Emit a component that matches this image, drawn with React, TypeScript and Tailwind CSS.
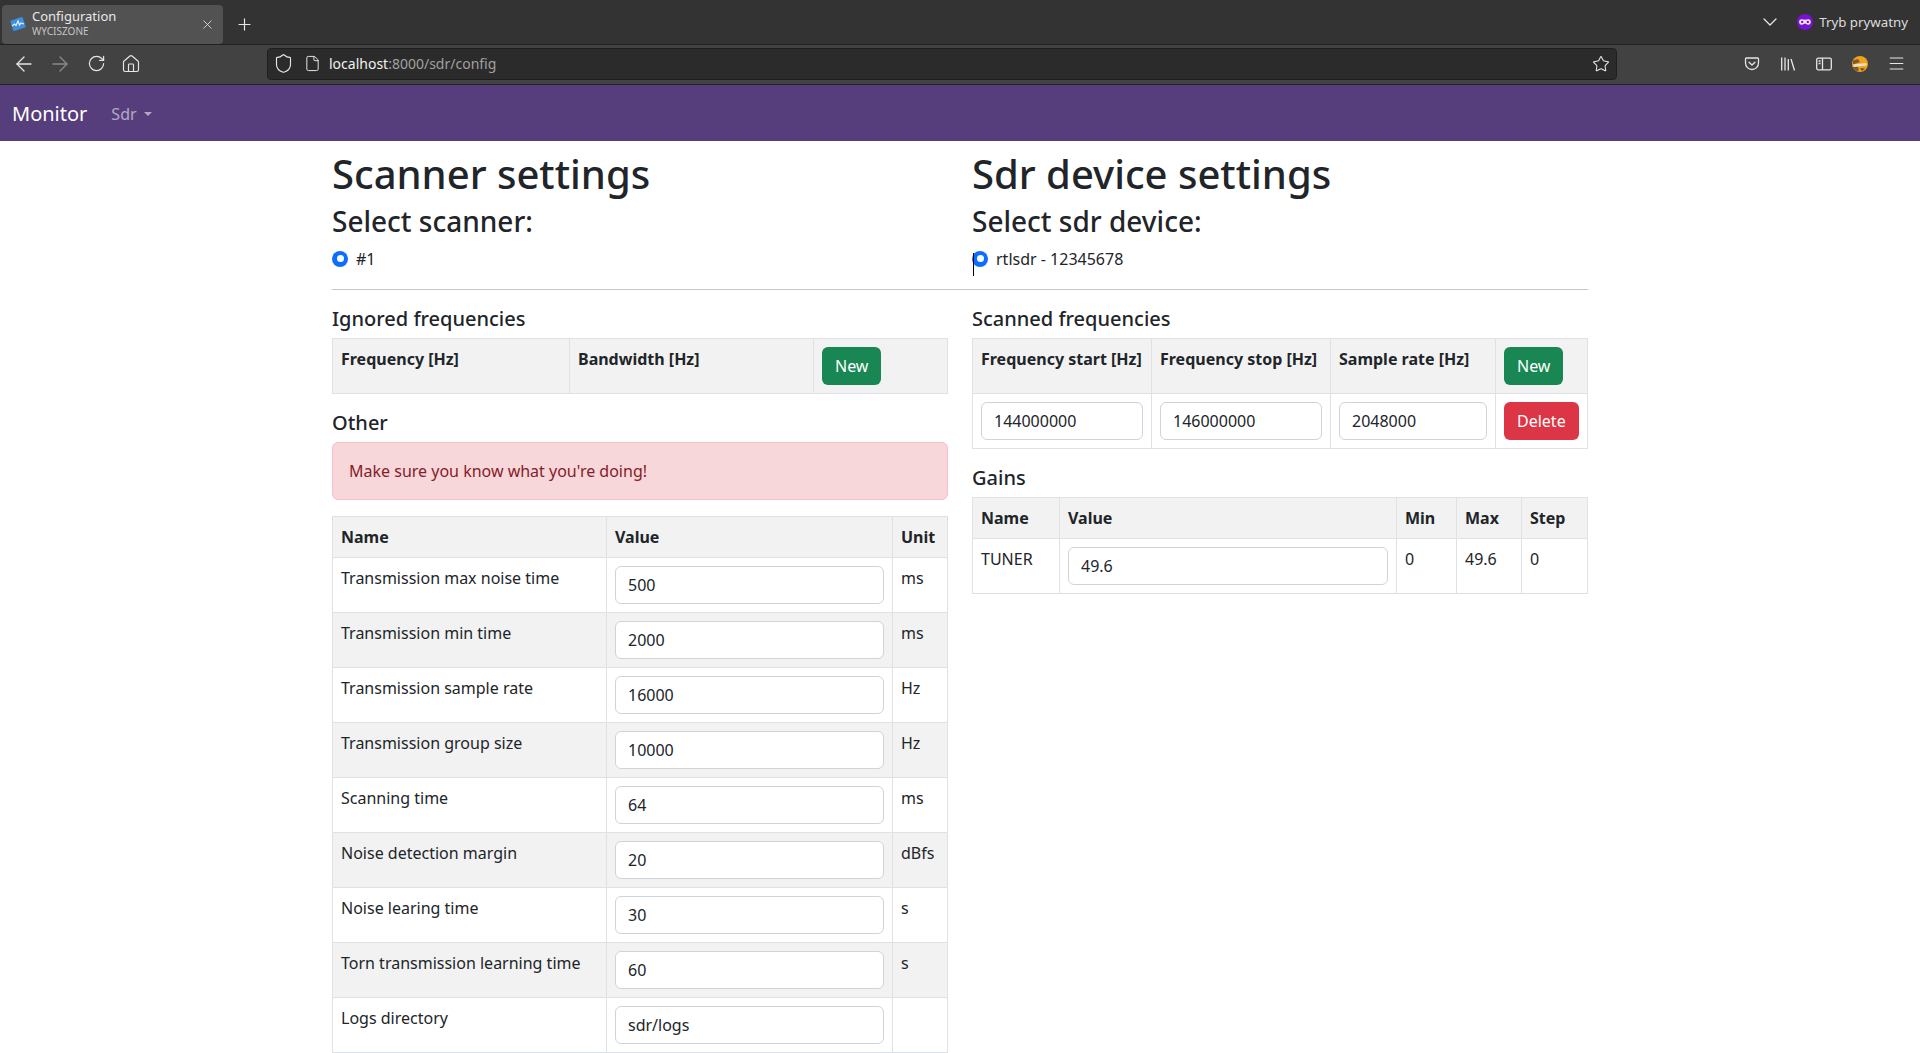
import React from 'react';
import { ArrowLeft, ArrowRight, RotateCw, House, Shield, File, Star, X, Plus, ChevronDown, Menu } from 'lucide-react';

const otherRows = [
  ['Transmission max noise time', '500', 'ms'],
  ['Transmission min time', '2000', 'ms'],
  ['Transmission sample rate', '16000', 'Hz'],
  ['Transmission group size', '10000', 'Hz'],
  ['Scanning time', '64', 'ms'],
  ['Noise detection margin', '20', 'dBfs'],
  ['Noise learing time', '30', 's'],
  ['Torn transmission learning time', '60', 's'],
  ['Logs directory', 'sdr/logs', ''],
];

const thClass = 'border border-[#dee2e6] p-2 text-left align-top font-bold';
const tdClass = 'border border-[#dee2e6] p-2 text-left align-top font-normal';

const TextInput = ({ value }: { value: string }) => (
  <input
    type="text"
    readOnly
    value={value}
    className="block h-[38px] w-full rounded-md border border-[#ced4da] bg-white px-3 py-1.5 text-[#212529] outline-none"
  />
);

const Button = ({ color, children }: { color: 'green' | 'red'; children: React.ReactNode }) => (
  <button
    className={
      color === 'green'
        ? 'h-[38px] rounded-md bg-[#198754] px-[13px] font-normal text-white'
        : 'h-[38px] rounded-md bg-[#dc3545] px-[13px] font-normal text-white'
    }
  >
    {children}
  </button>
);

const Radio = ({ label, caret }: { label: string; caret?: boolean }) => (
  <div className="relative flex h-6 items-center gap-2">
    <span className="flex h-4 w-4 items-center justify-center rounded-full bg-[#0d6efd]">
      <span className="h-[7px] w-[7px] rounded-full bg-white" />
    </span>
    <span>{label}</span>
    {caret && <span className="absolute left-[1px] top-[6px] h-[23px] w-px bg-black" />}
  </div>
);

const ToolButton = ({ children }: { children: React.ReactNode }) => (
  <div className="flex h-9 w-9 items-center justify-center">{children}</div>
);

const Favicon = () => (
  <svg width="16" height="16" viewBox="0 0 16 16">
    <rect x="1.5" y="2.5" width="13" height="11" rx="1" fill="#3d8fe0" transform="rotate(-18 8 8)" />
    <path d="M2 10l2.5-2 1.5 1.5L8 5l1.5 4 1.5-2 3 1" fill="none" stroke="#e8f4ff" strokeWidth="1.2" />
  </svg>
);

const PrivateMask = () => (
  <svg width="16" height="16" viewBox="0 0 16 16">
    <circle cx="8" cy="8" r="8" fill="#7a12d4" />
    <path
      d="M4.6 5.2c1.2 0 2.2.5 3.4.5s2.2-.5 3.4-.5c1.4 0 2.4 1 2.4 2.6 0 1.8-1 3-2.5 3-1.5 0-2.1-1.3-3.3-1.3S6.1 10.8 4.6 10.8c-1.5 0-2.5-1.2-2.5-3 0-1.6 1-2.6 2.5-2.6z"
      fill="#f3e8ff"
    />
    <circle cx="5.2" cy="7.9" r="1.2" fill="#7a12d4" />
    <circle cx="10.8" cy="7.9" r="1.2" fill="#7a12d4" />
  </svg>
);

const PocketIcon = () => (
  <svg width="16" height="16" viewBox="0 0 16 16" fill="none" stroke="#e6e6e6" strokeWidth="1.3">
    <path d="M2.4 2h11.2c.5 0 .9.4.9.9V7a6.5 6.5 0 0 1-13 0V2.9c0-.5.4-.9.9-.9z" />
    <path d="M5 6.2l3 2.8 3-2.8" strokeLinecap="round" strokeLinejoin="round" />
  </svg>
);

const LibraryIcon = () => (
  <svg width="16" height="16" viewBox="0 0 16 16" fill="none" stroke="#e6e6e6" strokeWidth="1.3">
    <path d="M1.7 1.5v13M5 1.5v13M8.3 3v11.5M11 3l3.5 11.5" />
  </svg>
);

const SidebarIcon = () => (
  <svg width="16" height="16" viewBox="0 0 16 16" fill="none" stroke="#e6e6e6" strokeWidth="1.3">
    <rect x="0.7" y="2.2" width="14.6" height="11.6" rx="1.5" />
    <path d="M6.5 2.2v11.6M2.6 5h2M2.6 7.5h2" />
  </svg>
);

const Avatar = () => (
  <svg width="16" height="16" viewBox="0 0 16 16">
    <circle cx="8" cy="8" r="8" fill="#f0a21a" />
    <path d="M1 4.5l5-1.5 2 3-7 2.5zM0 11l6-.5 1 4-3 .5z" fill="#7a5a30" />
    <path d="M1 8.5l13-1.5.8 2.5-13 1.5z" fill="#ece0c4" />
    <path d="M8 12l5 .5-3 2.5z" fill="#6b4c28" />
  </svg>
);

const BrowserChrome = () => (
  <div className="font-['Noto_Sans',sans-serif] text-[#e6e6e6]">
    <div className="flex h-[44px] items-end justify-between bg-[#333333] pl-[2px] pr-[12px]">
      <div className="flex h-[40px] items-center">
        <div className="flex h-[39px] w-[221px] items-center rounded-[4px] bg-[#525252] pl-[8px] pr-[8px]">
          <Favicon />
          <div className="ml-[6px] flex-1 -translate-y-[1px] leading-none">
            <div className="-translate-y-[1px] text-[13px] leading-[16px] text-[#e8e8e8]">Configuration</div>
            <div className="text-[10px] leading-[12px] text-[#c4c4c4]">WYCISZONE</div>
          </div>
          <X size={15} strokeWidth={1.3} />
        </div>
        <Plus size={19} strokeWidth={1.5} className="ml-[12px]" />
      </div>
      <div className="flex h-[40px] -translate-y-[2px] items-center text-[13.3px]">
        <ChevronDown size={24} strokeWidth={1.3} />
        <span className="ml-[15px] mr-[6px]">
          <PrivateMask />
        </span>
        <span className="text-[#dcdcdc]">Tryb prywatny</span>
      </div>
    </div>
    <div className="flex h-[41px] items-center justify-between border-y border-[#222222] bg-[#424242] pl-[5px] pr-[6px]">
      <div className="flex items-center -translate-y-[1px]">
        <ToolButton><ArrowLeft size={24} strokeWidth={1.3} className="translate-x-[1px]" /></ToolButton>
        <ToolButton><ArrowRight size={24} strokeWidth={1.3} className="translate-x-[1px] text-[#8a8a8a]" /></ToolButton>
        <ToolButton><RotateCw size={19} strokeWidth={1.5} className="translate-x-[1px]" /></ToolButton>
        <ToolButton><House size={20} strokeWidth={1.4} /></ToolButton>
      </div>
      <div className="ml-[118px] mr-[117px] flex h-[32px] flex-1 -translate-y-[1px] items-center rounded-[4px] border border-[#1f1f1f] bg-[#2b2b2b] pl-[5px] pr-[6px]">
        <Shield size={21} strokeWidth={1.3} />
        <File size={17} strokeWidth={1.4} className="ml-[10px]" />
        <span className="ml-[8px] flex-1 text-[14px]">
          <span className="text-[#f0f0f0]">localhost</span>
          <span className="text-[#a0a0a0]">:8000/sdr/config</span>
        </span>
        <Star size={18} strokeWidth={1.4} />
      </div>
      <div className="flex items-center -translate-y-[1px]">
        <ToolButton><PocketIcon /></ToolButton>
        <ToolButton><LibraryIcon /></ToolButton>
        <ToolButton><SidebarIcon /></ToolButton>
        <ToolButton><Avatar /></ToolButton>
        <ToolButton><Menu size={19} strokeWidth={1.4} /></ToolButton>
      </div>
    </div>
  </div>
);

const Navbar = () => (
  <nav className="flex h-[56px] items-center bg-[#563d7c] px-3 pt-[1px]">
    <span className="text-xl leading-[30px] text-white">Monitor</span>
    <span className="ml-6 flex items-center text-white/55">
      Sdr
      <span className="ml-[7px] h-0 w-0 border-x-[4px] border-t-[4px] border-x-transparent border-t-white/55" />
    </span>
  </nav>
);

export default function App() {
  return (
    <div className="h-screen overflow-hidden bg-white font-['Noto_Sans',sans-serif] text-base leading-6 text-[#212529]">
      <BrowserChrome />
      <Navbar />
      <main className="mx-auto w-[1280px] px-3 pt-[9px]">
        <div className="grid grid-cols-2 gap-x-6">
          <div>
            <h1 className="mb-[7px] text-[40px] leading-[48px] font-medium">Scanner settings</h1>
            <h3 className="mb-2 text-[28px] leading-[33.6px] font-medium">Select scanner:</h3>
            <Radio label="#1" />
          </div>
          <div>
            <h1 className="mb-[7px] text-[40px] leading-[48px] font-medium">Sdr device settings</h1>
            <h3 className="mb-2 text-[28px] leading-[33.6px] font-medium">Select sdr device:</h3>
            <Radio label="rtlsdr - 12345678" caret />
          </div>
        </div>

        <hr className="mt-[18px] mb-[17px] border-t border-[#c6c7c8]" />

        <div className="grid grid-cols-2 gap-x-6">
          {/* Scanner column */}
          <div>
            <h5 className="mb-[7px] text-xl leading-6 font-medium">Ignored frequencies</h5>
            <table className="mb-[17px] w-full table-fixed border-collapse">
              <thead>
                <tr className="bg-[#f2f2f2]">
                  <th className={`${thClass} w-[237px]`}>Frequency [Hz]</th>
                  <th className={`${thClass} w-[244px]`}>Bandwidth [Hz]</th>
                  <th className={thClass}><Button color="green">New</Button></th>
                </tr>
              </thead>
            </table>

            <h5 className="mb-[7px] text-xl leading-6 font-medium">Other</h5>
            <div className="mb-4 rounded-md border border-[#f5c2c7] bg-[#f8d7da] p-4 text-[#842029]">
              Make sure you know what you're doing!
            </div>

            <table className="w-full table-fixed border-collapse">
              <thead>
                <tr className="bg-[#f2f2f2]">
                  <th className={`${thClass} w-[274px]`}>Name</th>
                  <th className={`${thClass} w-[286px]`}>Value</th>
                  <th className={thClass}>Unit</th>
                </tr>
              </thead>
              <tbody>
                {otherRows.map(([name, value, unit], i) => (
                  <tr key={name} className={i % 2 === 1 ? 'bg-[#f2f2f2]' : 'bg-white'}>
                    <td className={tdClass}>{name}</td>
                    <td className={tdClass}><TextInput value={value} /></td>
                    <td className={tdClass}>{unit}</td>
                  </tr>
                ))}
              </tbody>
            </table>
          </div>

          {/* Sdr device column */}
          <div>
            <h5 className="mb-[7px] text-xl leading-6 font-medium">Scanned frequencies</h5>
            <table className="mb-[17px] w-full table-fixed border-collapse">
              <thead>
                <tr className="bg-[#f2f2f2]">
                  <th className={`${thClass} w-[179px] whitespace-nowrap`}>Frequency start [Hz]</th>
                  <th className={`${thClass} w-[179px] whitespace-nowrap`}>Frequency stop [Hz]</th>
                  <th className={`${thClass} w-[165px] whitespace-nowrap`}>Sample rate [Hz]</th>
                  <th className={thClass}><Button color="green">New</Button></th>
                </tr>
              </thead>
              <tbody>
                <tr>
                  <td className={tdClass}><TextInput value="144000000" /></td>
                  <td className={tdClass}><TextInput value="146000000" /></td>
                  <td className={tdClass}><TextInput value="2048000" /></td>
                  <td className={tdClass}><Button color="red">Delete</Button></td>
                </tr>
              </tbody>
            </table>

            <h5 className="mb-[7px] text-xl leading-6 font-medium">Gains</h5>
            <table className="w-full table-fixed border-collapse">
              <thead>
                <tr className="bg-[#f2f2f2]">
                  <th className={`${thClass} w-[87px]`}>Name</th>
                  <th className={`${thClass} w-[337px]`}>Value</th>
                  <th className={`${thClass} w-[60px]`}>Min</th>
                  <th className={`${thClass} w-[65px]`}>Max</th>
                  <th className={thClass}>Step</th>
                </tr>
              </thead>
              <tbody>
                <tr>
                  <td className={tdClass}>TUNER</td>
                  <td className={tdClass}><TextInput value="49.6" /></td>
                  <td className={tdClass}>0</td>
                  <td className={tdClass}>49.6</td>
                  <td className={tdClass}>0</td>
                </tr>
              </tbody>
            </table>
          </div>
        </div>
      </main>
    </div>
  );
}
